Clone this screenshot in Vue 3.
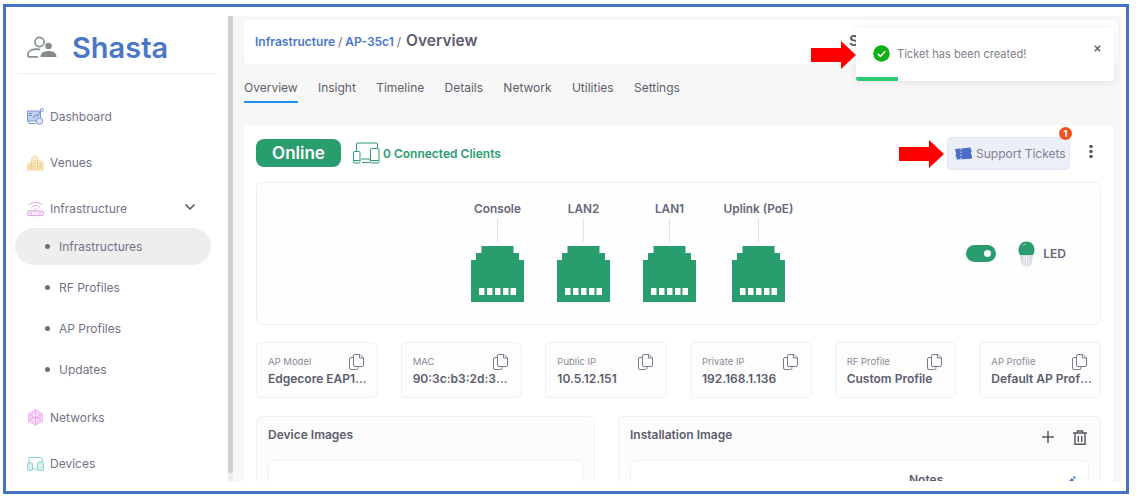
<script setup>
const tabs = ['Overview', 'Insight', 'Timeline', 'Details', 'Network', 'Utilities', 'Settings']
const ports = [
  { name: 'Console', cls: 'p1' },
  { name: 'LAN2', cls: 'p2' },
  { name: 'LAN1', cls: 'p3' },
  { name: 'Uplink (PoE)', cls: 'p4' }
]
const infos = [
  ['AP Model', 'Edgecore EAP101-A'],
  ['MAC', '90:3c:b3:2d:35:c1'],
  ['Public IP', '10.5.12.151'],
  ['Private IP', '192.168.1.136'],
  ['RF Profile', 'Custom Profile'],
  ['AP Profile', 'Default AP Profile']
]
const subs = ['Infrastructures', 'RF Profiles', 'AP Profiles', 'Updates']
</script>

<template>
  <div class="frame">
    <aside class="side">
      <div class="brand">
        <svg class="brand-ico" width="30" height="22" viewBox="0 0 30 22" fill="none">
          <circle cx="12.5" cy="6" r="4.6" stroke="#858c90" stroke-width="1.7" />
          <path d="M1 21v-2.6c0-3 3.4-5 8-5.2 1.6-.1 3 0 4.2.4" stroke="#858c90" stroke-width="1.7" />
          <path d="M1 20.9h10" stroke="#858c90" stroke-width="1.7" />
          <circle cx="21.5" cy="10" r="3.3" fill="#858c90" />
          <path d="M13.5 21c0-4 3.2-6 8-6s8 2 8 6z" fill="#858c90" />
        </svg>
        <span class="brand-name">Shasta</span>
      </div>
      <nav class="nav">
        <div class="nav-item first">
          <svg width="17" height="17" viewBox="0 0 17 17" fill="none">
            <rect x="0.5" y="3" width="13" height="10" fill="#c4d1f0" stroke="#7c97d8" />
            <path d="M2 5.500h3M2 7.500h2.500M6 10l2.500-3 2 1 3-5" stroke="#5c82cf" />
            <circle cx="14.800" cy="2" r="1.500" fill="#fff" stroke="#7c97d8" />
            <circle cx="12.500" cy="13" r="3.200" fill="#dde5f7" stroke="#7c97d8" />
            <path d="M2 13v2.500h7" stroke="#7c97d8" />
          </svg>
          <span>Dashboard</span>
        </div>
        <div class="nav-item">
          <svg width="17" height="17" viewBox="0 0 17 17" fill="none">
            <path d="M.8 16V10l4-1.500V16zM4.800 16V4.500L8 1l2.500 2.500V16zM10.500 16V6.500L16 8v8z" fill="#fbf0d4" stroke="#eccd88" stroke-width=".9" />
            <path d="M1.500 12h2.500M1.500 14h2.500M6 7h3M6 9.500h3M6 12h3M6 14h3M11.500 10h3.500M11.500 12h3.500M11.500 14h3.500" stroke="#e8c272" stroke-width=".9" />
          </svg>
          <span>Venues</span>
        </div>
        <div class="nav-item open">
          <svg width="17" height="17" viewBox="0 0 17 17" fill="none" stroke="#dd9ee8">
            <rect x="0.600" y="11" width="15.800" height="4.600" rx="1.200" fill="#f9eafb" />
            <path d="M2 5c3.600-3.400 9.400-3.400 13 0M4.400 7.400c2.400-2.200 5.800-2.200 8.200 0M6.800 9.600c1-.8 2.400-.8 3.400 0" />
            <path d="M3 13.300h2M12 13.300h2" />
          </svg>
          <span>Infrastructure</span>
          <svg class="chev" width="12" height="8" viewBox="0 0 12 8" fill="none">
            <path d="M1.500 1.500 6 6l4.500-4.500" stroke="#4d4d60" stroke-width="1.500" />
          </svg>
        </div>
        <div class="subs">
          <div v-for="(s, i) in subs" :key="s" class="sub" :class="{ active: i === 0 }">
            <i class="dot"></i><span>{{ s }}</span>
          </div>
        </div>
        <div class="nav-item">
          <svg width="17" height="17" viewBox="0 0 17 17" fill="none" stroke="#eba8f2" stroke-width=".9">
            <path d="M8.500.8 15.400 4.700v7.600L8.500 16.200 1.600 12.300V4.700z" fill="#fae6fc" />
            <circle cx="8.500" cy="8.500" r="5" />
            <path d="M8.500 1v15M1.800 5l13.400 7M15.200 5 1.800 12M3.500 8.500h10" />
          </svg>
          <span>Networks</span>
        </div>
        <div class="nav-item">
          <svg width="17" height="17" viewBox="0 0 17 17" fill="none" stroke="#8ed0d0">
            <path d="M2 8V3.500A1 1 0 0 1 3 2.500h11a1 1 0 0 1 1 1V7" />
            <rect x="0.600" y="8" width="5" height="7.400" rx="1" fill="#d6f0f0" />
            <rect x="10.500" y="7" width="6" height="8.400" rx="1" fill="#d6f0f0" />
            <path d="M6 14h4" />
          </svg>
          <span>Devices</span>
        </div>
      </nav>
    </aside>

    <div class="content">
      <div class="track"><div class="thumb"></div></div>
      <main class="main">
        <header class="crumbs">
          <div class="crumb-left">
            <a>Infrastructure</a><em>/</em><a>AP-35c1</a><em class="last">/</em><strong>Overview</strong>
          </div>
          <div class="crumb-right">S</div>
        </header>

        <div class="tabs">
          <span v-for="(t, i) in tabs" :key="t" class="tab" :class="{ on: i === 0 }">{{ t }}</span>
        </div>

        <section class="card">
          <div class="status">
            <span class="pill">Online</span>
            <svg class="clients" width="27" height="22" viewBox="0 0 27 22" fill="none" stroke="#2a9d6f" stroke-width="1">
              <path d="M3.500 9V2a1 1 0 0 1 1-1h19a1 1 0 0 1 1 1v5" />
              <rect x="0.500" y="9.500" width="6.500" height="11.500" rx="1.200" fill="#fff" />
              <rect x="17.500" y="6.500" width="8.500" height="14.500" rx="1.200" fill="#fff" />
              <path d="M8 17h9M9 20.500h8" />
              <path d="M1 18.500h5.500M18 18.500h7.500" />
            </svg>
            <span class="conn">0 Connected Clients</span>
            <button class="support">
              <svg width="18" height="13" viewBox="0 0 18 13">
                <path d="M1 2 17 0.500c-.6 1.400-.1 2.600.9 3.500-1.200 1-1.300 2.600-.3 3.800.5 1.300.4 2.600 0 4L2.500 12.500c.5-1.500 0-3-1.300-3.800C2.300 7.500 2.400 5.600 1.400 4.500 1.500 3.700 1.300 2.800 1 2z" fill="#4a6fc4" />
                <path d="M7 1.500v10.500" stroke="#dfe6f6" stroke-dasharray="1.500 1.500" />
              </svg>
              <span>Support Tickets</span>
              <i class="badge">1</i>
            </button>
            <svg class="kebab" width="6" height="15" viewBox="0 0 6 15" fill="#5c5c6e">
              <circle cx="3" cy="2.500" r="1.800" />
              <circle cx="3" cy="7.500" r="1.800" />
              <circle cx="3" cy="12.500" r="1.800" />
            </svg>
          </div>

          <div class="ports">
            <div class="port-set">
              <div v-for="p in ports" :key="p.name" class="port" :class="p.cls">
                <span class="port-name">{{ p.name }}</span>
                <i class="port-line"></i>
                <svg width="53" height="56" viewBox="0 0 53 56">
                  <path d="M10.500 0h32v7h5.500v7h5v42H0V14h5V7h5.500z" fill="#2a9d6f" />
                  <g fill="#fff">
                    <rect x="8" y="42" width="5.500" height="7" />
                    <rect x="16" y="42" width="5.500" height="7" />
                    <rect x="24" y="42" width="5.500" height="7" />
                    <rect x="32" y="42" width="5.500" height="7" />
                    <rect x="39.500" y="42" width="5.500" height="7" />
                  </g>
                </svg>
              </div>
            </div>
            <div class="led">
              <i class="toggle"></i>
              <svg width="17" height="26" viewBox="0 0 17 26" fill="none">
                <path d="M1.500 12h14l-2 10.500c-.3 1.500-2 3-5 3s-4.700-1.500-5-3z" fill="#d5dbe3" />
                <path d="M6 15v9M8.500 15v10M11 15v9" stroke="#fff" stroke-width=".8" />
                <path d="M.5 8.500a8 8 0 0 1 16 0c0 2.500-.6 4-1.500 5.500H2C1.100 12.500.5 11 .5 8.500z" fill="#2a9d6f" />
                <path d="M5 5c.8-1.200 1.800-1.800 3-2" stroke="#a5dcc4" />
              </svg>
              <span>LED</span>
            </div>
          </div>

          <div class="infos">
            <div v-for="info in infos" :key="info[0]" class="info">
              <div class="info-text">
                <small>{{ info[0] }}</small>
                <b>{{ info[1] }}</b>
              </div>
              <svg class="copy" width="15" height="16" viewBox="0 0 15 16" fill="none" stroke="#7c7c8c" stroke-width="1">
                <path d="M4.500 3.500H2A1.500 1.500 0 0 0 .5 5v9A1.500 1.500 0 0 0 2 15.500h5.500A1.500 1.500 0 0 0 9 14v-1.500" />
                <path d="M4.500 2A1.500 1.500 0 0 1 6 .5h5l3.500 3.500v7A1.500 1.500 0 0 1 13 12.500H6A1.500 1.500 0 0 1 4.500 11z" fill="#fff" />
                <path d="M10.500.5v3.500h4" />
              </svg>
            </div>
          </div>

          <div class="lower">
            <div class="panel">
              <h3>Device Images</h3>
              <div class="inner"></div>
            </div>
            <div class="panel">
              <div class="panel-head">
                <h3>Installation Image</h3>
                <div class="tools">
                  <svg width="14" height="14" viewBox="0 0 14 14" stroke="#55555f" stroke-width="1.500">
                    <path d="M7 1v12M1 7h12" />
                  </svg>
                  <svg width="14" height="16" viewBox="0 0 14 16" fill="none" stroke="#55555f" stroke-width="1.400">
                    <path d="M0 3h14M4.500 3V1h5v2M2 3v11.300h10V3M5.300 6v6M8.700 6v6" />
                  </svg>
                </div>
              </div>
              <div class="inner notes-box">
                <span class="notes">Notes</span>
                <svg class="pen" width="10" height="10" viewBox="0 0 10 10" fill="#3f6fd0">
                  <path d="M0 10V8l6-6 2 2-6 6zM7 1l1-1 2 2-1 1z" />
                </svg>
              </div>
            </div>
          </div>
        </section>
      </main>
    </div>

    <div class="toast">
      <svg width="17" height="17" viewBox="0 0 17 17">
        <circle cx="8.500" cy="8.500" r="8.300" fill="#0fb015" />
        <path d="M4.800 8.800l2.600 2.600 4.900-5.200" fill="none" stroke="#fff" stroke-width="1.500" />
      </svg>
      <span>Ticket has been created!</span>
      <svg class="toast-x" width="7" height="7" viewBox="0 0 7 7" stroke="#55556a" stroke-width="1.300">
        <path d="M.8.800l5.400 5.400M6.200.800.800 6.200" />
      </svg>
      <i class="progress"></i>
    </div>

    <svg class="arrow arrow-a" width="45" height="28" viewBox="0 0 45 28"><path d="M0 7h30V0l15 14-15 14v-7H0z" fill="#f00" /></svg>
    <svg class="arrow arrow-b" width="45" height="28" viewBox="0 0 45 28"><path d="M0 7h30V0l15 14-15 14v-7H0z" fill="#f00" /></svg>
  </div>
</template>

<style scoped>
.frame {
  position: relative;
  box-sizing: border-box;
  width: 1126px;
  height: 490px;
  margin: 4px 0 0 3px;
  border: 3px solid #4472c4;
  display: flex;
  overflow: hidden;
  background: #fff;
  font-family: Inter, "Liberation Sans", sans-serif;
  color: #737388;
}
.side {
  width: 222px;
  flex: none;
  box-sizing: border-box;
  padding: 0 12px 0 9px;
}
.brand {
  height: 67px;
  box-sizing: border-box;
  border-bottom: 1px solid #eceef4;
  display: flex;
  align-items: center;
  padding: 14px 0 0 12px;
  margin-right: -1px;
}
.brand-ico { margin-right: 15px; }
.brand-name {
  font-size: 29px;
  font-weight: 600;
  color: #4a76c9;
}
.nav { padding-top: 19px; }
.nav-item {
  height: 46px;
  display: flex;
  align-items: center;
  gap: 6px;
  padding-left: 12px;
  font-size: 12px;
  position: relative;
}
.chev { margin-left: auto; margin-right: 20px; margin-top: -3px; }
.subs { padding-bottom: 4px; margin-top: -4px; }
.sub {
  height: 41px;
  display: flex;
  align-items: center;
  font-size: 12px;
  padding-left: 30px;
  margin-right: 5px;
  border-radius: 19px;
}
.sub.active { height: 37px; background: #eeeeee; margin-bottom: 2px; margin-top: 1px; }
.dot {
  width: 5px;
  height: 5px;
  border-radius: 50%;
  background: #6f6f6f;
  margin-right: 9px;
}
.content {
  flex: 1;
  min-width: 0;
  display: flex;
  padding: 9px 5px 10px 0;
}
.track { width: 5px; background: #ededed; flex: none; }
.thumb { height: 457px; background: #cfcfcf; border-radius: 0 0 3px 3px; }
.main {
  flex: 1;
  min-width: 0;
  background: #f7f7f7;
  padding: 4px 3px 0 11px;
  overflow: hidden;
}
.crumbs {
  height: 44px;
  box-sizing: border-box;
  background: #fff;
  border-radius: 4px;
  box-shadow: 0 0 2px #e6e6e6;
  display: flex;
  align-items: center;
  justify-content: space-between;
  padding: 0 0 3px 11px;
}
.crumb-left { display: flex; align-items: baseline; font-size: 12px; font-weight: 600; color: #4a76c9; }
.crumb-left em { font-style: normal; font-weight: 400; color: #6b6b80; margin: 0 3px; }
.crumb-left em.last { margin-right: 5px; }
.crumb-left strong { font-size: 15.500px; color: #5c5c6e; font-weight: 600; }
.crumb-right { width: 269px; font-size: 15px; font-weight: 600; color: #5c5c6e; }
.tabs {
  height: 61px;
  box-sizing: border-box;
  display: flex;
  gap: 20.300px;
  align-items: flex-start;
  padding-top: 16px;
  font-size: 12px;
  color: #5f5f6c;
}
.tab { padding-bottom: 6px; border-bottom: 2px solid transparent; line-height: 15px; }
.tab.on { border-bottom-color: #1f8ff0; }
.card {
  width: 869px;
  box-sizing: border-box;
  background: #fff;
  border-radius: 4px;
  padding: 0 12px;
}
.status { height: 56px; margin-bottom: 1px; display: flex; align-items: center; position: relative; }
.pill {
  width: 85px;
  height: 28px;
  background: #2a9d6f;
  color: #fff;
  border-radius: 8px;
  font-size: 17px;
  font-weight: 600;
  display: flex;
  align-items: center;
  justify-content: center;
}
.clients { margin-left: 12px; margin-right: 3px; }
.conn { font-size: 12px; font-weight: 600; color: #2a9d6f; }
.support {
  margin-left: auto;
  width: 123px;
  height: 33px;
  border: 1px solid #e3e7f2;
  border-radius: 4px;
  background: #eceff8;
  display: flex;
  align-items: center;
  gap: 4px;
  padding: 0 0 0 6px;
  font: 12px Inter, "Liberation Sans", sans-serif;
  color: #808094;
  position: relative;
}
.badge {
  position: absolute;
  right: -3px;
  top: -11px;
  width: 13px;
  height: 13px;
  border-radius: 50%;
  background: #f4511e;
  color: #fff;
  font: 700 9px/13px Inter, sans-serif;
  text-align: center;
}
.kebab { margin-left: 18px; margin-right: 7px; margin-top: -3px; }
.ports {
  height: 143px;
  box-sizing: border-box;
  border: 1px solid #eff0f3;
  border-radius: 6px;
  background: #fefefe;
  display: flex;
  position: relative;
}
.port-set { display: flex; padding: 18px 0 0 214px; }
.port {
  width: 53px;
  display: flex;
  flex-direction: column;
  align-items: center;
  font-size: 11.800px;
  font-weight: 600;
  color: #66667a;
}
.p2, .p3 { margin-left: 33px; }
.p4 { margin-left: 36px; }
.port-name { white-space: nowrap; line-height: 17px; height: 17px; }
.port-line { width: 1px; height: 24px; background: #e0e2e6; margin: 0 0 4px; }
.led {
  margin-left: auto;
  display: flex;
  align-items: center;
  font-size: 12px;
  font-weight: 600;
  color: #66667a;
  padding: 0 34px 0 0;
}
.toggle {
  position: relative;
  width: 30px;
  height: 17px;
  border-radius: 9px;
  background: #2a9d6f;
  margin-right: 22px;
}
.toggle::after {
  content: "";
  position: absolute;
  right: 5px;
  top: 5px;
  width: 7px;
  height: 7px;
  border-radius: 50%;
  background: #fff;
}
.led span { margin-left: 8px; }
.infos {
  display: grid;
  grid-template-columns: repeat(6, minmax(0, 1fr));
  gap: 23px;
  margin-top: 17px;
}
.info {
  height: 56px;
  box-sizing: border-box;
  border: 1px solid #f0f1f4;
  border-radius: 5px;
  background: #fdfdfd;
  padding: 12px 8px 0 11px;
  display: flex;
  position: relative;
}
.info-text { min-width: 0; flex: 1; display: flex; flex-direction: column; }
.info small { font-size: 9.500px; line-height: 13px; color: #8a8a98; }
.info b {
  font-size: 12px;
  line-height: 21px;
  font-weight: 600;
  color: #5c5c6e;
  white-space: nowrap;
  overflow: hidden;
  text-overflow: ellipsis;
}
.copy { position: absolute; right: 13px; top: 11px; }
.lower {
  display: grid;
  grid-template-columns: 339px 483px;
  gap: 23px;
  margin-top: 18px;
}
.panel {
  height: 120px;
  box-sizing: border-box;
  border: 1px solid #f0f1f4;
  border-radius: 5px;
  background: #fcfcfc;
  padding: 10px 11px 0;
}
.panel h3 {
  margin: 0;
  height: 33px;
  line-height: 16px;
  font-size: 12px;
  font-weight: 600;
  color: #5c5c6e;
}
.panel-head { display: flex; justify-content: space-between; }
.tools { display: flex; gap: 18px; padding: 3px 2px 0 0; height: 16px; }
.inner {
  height: 90px;
  background: #fff;
  border: 1px solid #f0f1f4;
  border-radius: 5px;
}
.notes-box { position: relative; }
.notes { position: absolute; left: 278px; top: 11px; font-size: 12px; font-weight: 600; color: #5c5c6e; }
.pen { position: absolute; right: 12px; top: 15px; }
.toast {
  position: absolute;
  left: 850px;
  top: 21px;
  width: 258px;
  height: 53px;
  box-sizing: border-box;
  background: #fff;
  border-radius: 3px;
  box-shadow: 0 1px 8px rgba(0, 0, 0, .09);
  display: flex;
  align-items: center;
  padding: 0 0 2px 17px;
  gap: 7px;
  font-size: 11.100px;
  color: #80808c;
  overflow: hidden;
}
.toast-x { position: absolute; right: 13px; top: 17px; }
.progress { position: absolute; left: 0; bottom: 0; width: 42px; height: 4px; background: #2ecc71; }
.arrow { position: absolute; }
.arrow-a { left: 805px; top: 34px; }
.arrow-b { left: 893px; top: 133px; }
</style>

<style>
html, body { background: #fff; overflow: hidden; }
</style>
